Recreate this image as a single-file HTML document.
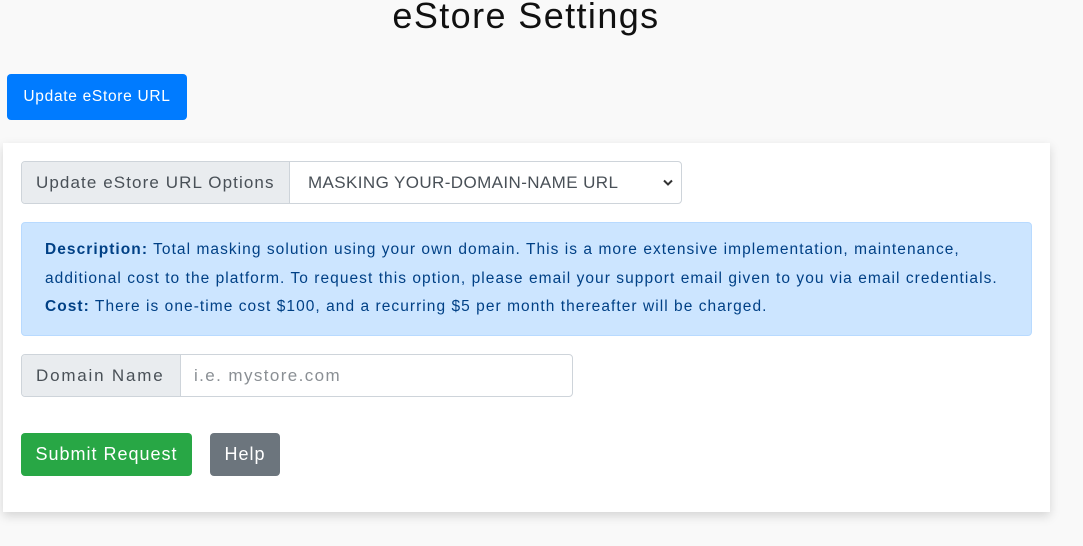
<!DOCTYPE html>
<html><head><style>
body{margin:0;background:#f9f9f9;font-family:"Liberation Sans",sans-serif;width:1083px;height:546px;overflow:hidden;position:relative;color:#212529}
h1{position:absolute;top:-6px;left:0;width:1052px;text-align:center;font-weight:400;font-size:36px;letter-spacing:1.4px;margin:0;line-height:44px;color:#111}
.btn{position:absolute;color:#fff;border-radius:4px;display:flex;align-items:center;justify-content:center;box-sizing:border-box}
.card{position:absolute;left:3px;top:143px;width:1047px;height:369px;background:#fff;box-shadow:0 4px 10px rgba(0,0,0,.15)}
.grp{position:absolute;display:flex;border:1px solid #ced4da;border-radius:4px;box-sizing:border-box;font-size:17px;overflow:hidden}
.lab{background:#e9ecef;border-right:1px solid #ced4da;display:flex;align-items:center;padding-left:14px;box-sizing:border-box;color:#495057}
.inp{display:flex;align-items:center;padding-left:18px;color:#495057;flex:1;position:relative}
.alert{position:absolute;left:21px;top:222px;width:1011px;height:114px;background:#cce5ff;border:1px solid #b8daff;border-radius:4px;box-sizing:border-box;color:#004085;font-size:15.5px;line-height:28.5px;padding:13px 0 0 23px;letter-spacing:1.05px;white-space:nowrap}
</style></head><body>
<h1>eStore Settings</h1>
<div class="btn" style="left:7px;top:74px;width:180px;height:46px;background:#007bff;font-size:15.5px;letter-spacing:.7px">Update eStore URL</div>
<div class="card"></div>
<div class="grp" style="left:21px;top:161px;width:661px;height:43px">
<div class="lab" style="width:268px;letter-spacing:1.1px">Update eStore URL Options</div>
<div class="inp" style="letter-spacing:.4px">MASKING YOUR-DOMAIN-NAME URL<svg style="position:absolute;right:8px;top:17px" width="10" height="8" viewBox="0 0 10 8"><path d="M1 1.5L5 5.5 9 1.5" stroke="#333" stroke-width="2" fill="none"/></svg></div>
</div>
<div class="alert"><b>Description:</b> Total masking solution using your own domain. This is a more extensive implementation, maintenance,<br>additional cost to the platform. To request this option, please email your support email given to you via email credentials.<br><b>Cost:</b> There is one-time cost $100, and a recurring $5 per month thereafter will be charged.</div>
<div class="grp" style="left:21px;top:354px;width:552px;height:43px">
<div class="lab" style="width:159px;letter-spacing:1.8px">Domain Name</div>
<div class="inp" style="padding-left:13px;color:#8a8f94;letter-spacing:1.4px">i.e. mystore.com</div>
</div>
<div class="btn" style="left:21px;top:433px;width:171px;height:43px;background:#28a745;font-size:18px;letter-spacing:1px">Submit Request</div>
<div class="btn" style="left:210px;top:433px;width:70px;height:43px;background:#6c757d;font-size:18px;letter-spacing:1px">Help</div>
</body></html>
